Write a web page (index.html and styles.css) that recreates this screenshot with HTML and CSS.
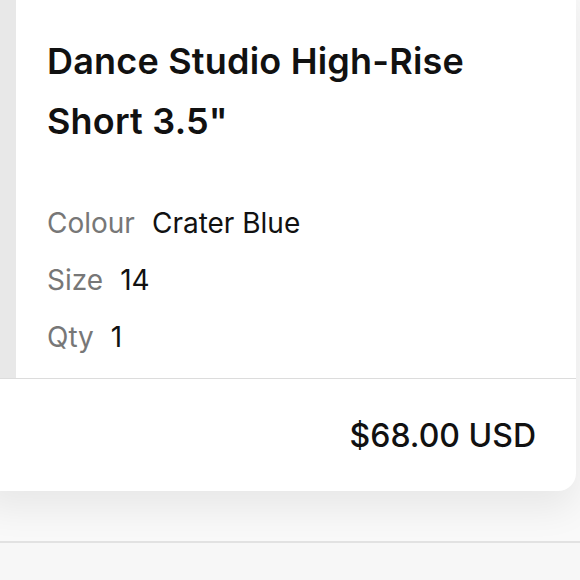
FILE: index.html
```html
<!DOCTYPE html>
<html lang="en">
<head>
    <meta charset="UTF-8">
    <meta name="viewport" content="width=device-width, initial-scale=1.0">
    <title>Order Summary</title>
    <link rel="stylesheet" href="styles.css">
</head>
<body>
    <!-- Order item card -->
    <div class="card">
        <div class="item">
            <div class="thumb"></div>
            <div class="info">
                <h2 class="title">Dance Studio High-Rise Short 3.5"</h2>
                <div class="detail"><span class="label">Colour</span><span class="value">Crater Blue</span></div>
                <div class="detail"><span class="label">Size</span><span class="value">14</span></div>
                <div class="detail"><span class="label">Qty</span><span class="value">1</span></div>
            </div>
        </div>
        <div class="total">
            <span class="price">$68.00 USD</span>
        </div>
    </div>

    <!-- Next section -->
    <div class="next-section"></div>
</body>
</html>
```

FILE: styles.css
```css
body {
    margin: 0;
    background-color: #f9f9f9;
    font-family: Inter, "Noto Sans", sans-serif;
    color: #111;
    overflow: hidden;
    height: 580px;
}
.card {
    width: 596px;
    margin: -20px 0 0 -20px;
    background-color: #fff;
    border-radius: 18px;
    box-shadow: 0 18px 36px rgba(0, 0, 0, 0.07);
}
.item {
    display: flex;
    height: 398px;
}
.thumb {
    width: 36px;
    background-color: #e8e8e8;
}
.info {
    padding: 51px 0 0 31px;
}
.title {
    margin: 0 0 44px;
    font-size: 36px;
    font-weight: 600;
    line-height: 60px;
    letter-spacing: 0.2px;
    max-width: 480px;
}
.detail {
    font-size: 28px;
    line-height: 57px;
}
.label {
    color: #777;
    margin-right: 17px;
}
.value {
    color: #111;
}
.total {
    border-top: 1px solid #dcdcdc;
    height: 112px;
    display: flex;
    align-items: center;
    justify-content: flex-end;
    padding-right: 40px;
}
.price {
    font-size: 32px;
    font-weight: 500;
}
.next-section {
    margin-top: 50px;
    border-top: 2px solid #e2e2e2;
    background-color: #f7f7f7;
    height: 40px;
}
```
